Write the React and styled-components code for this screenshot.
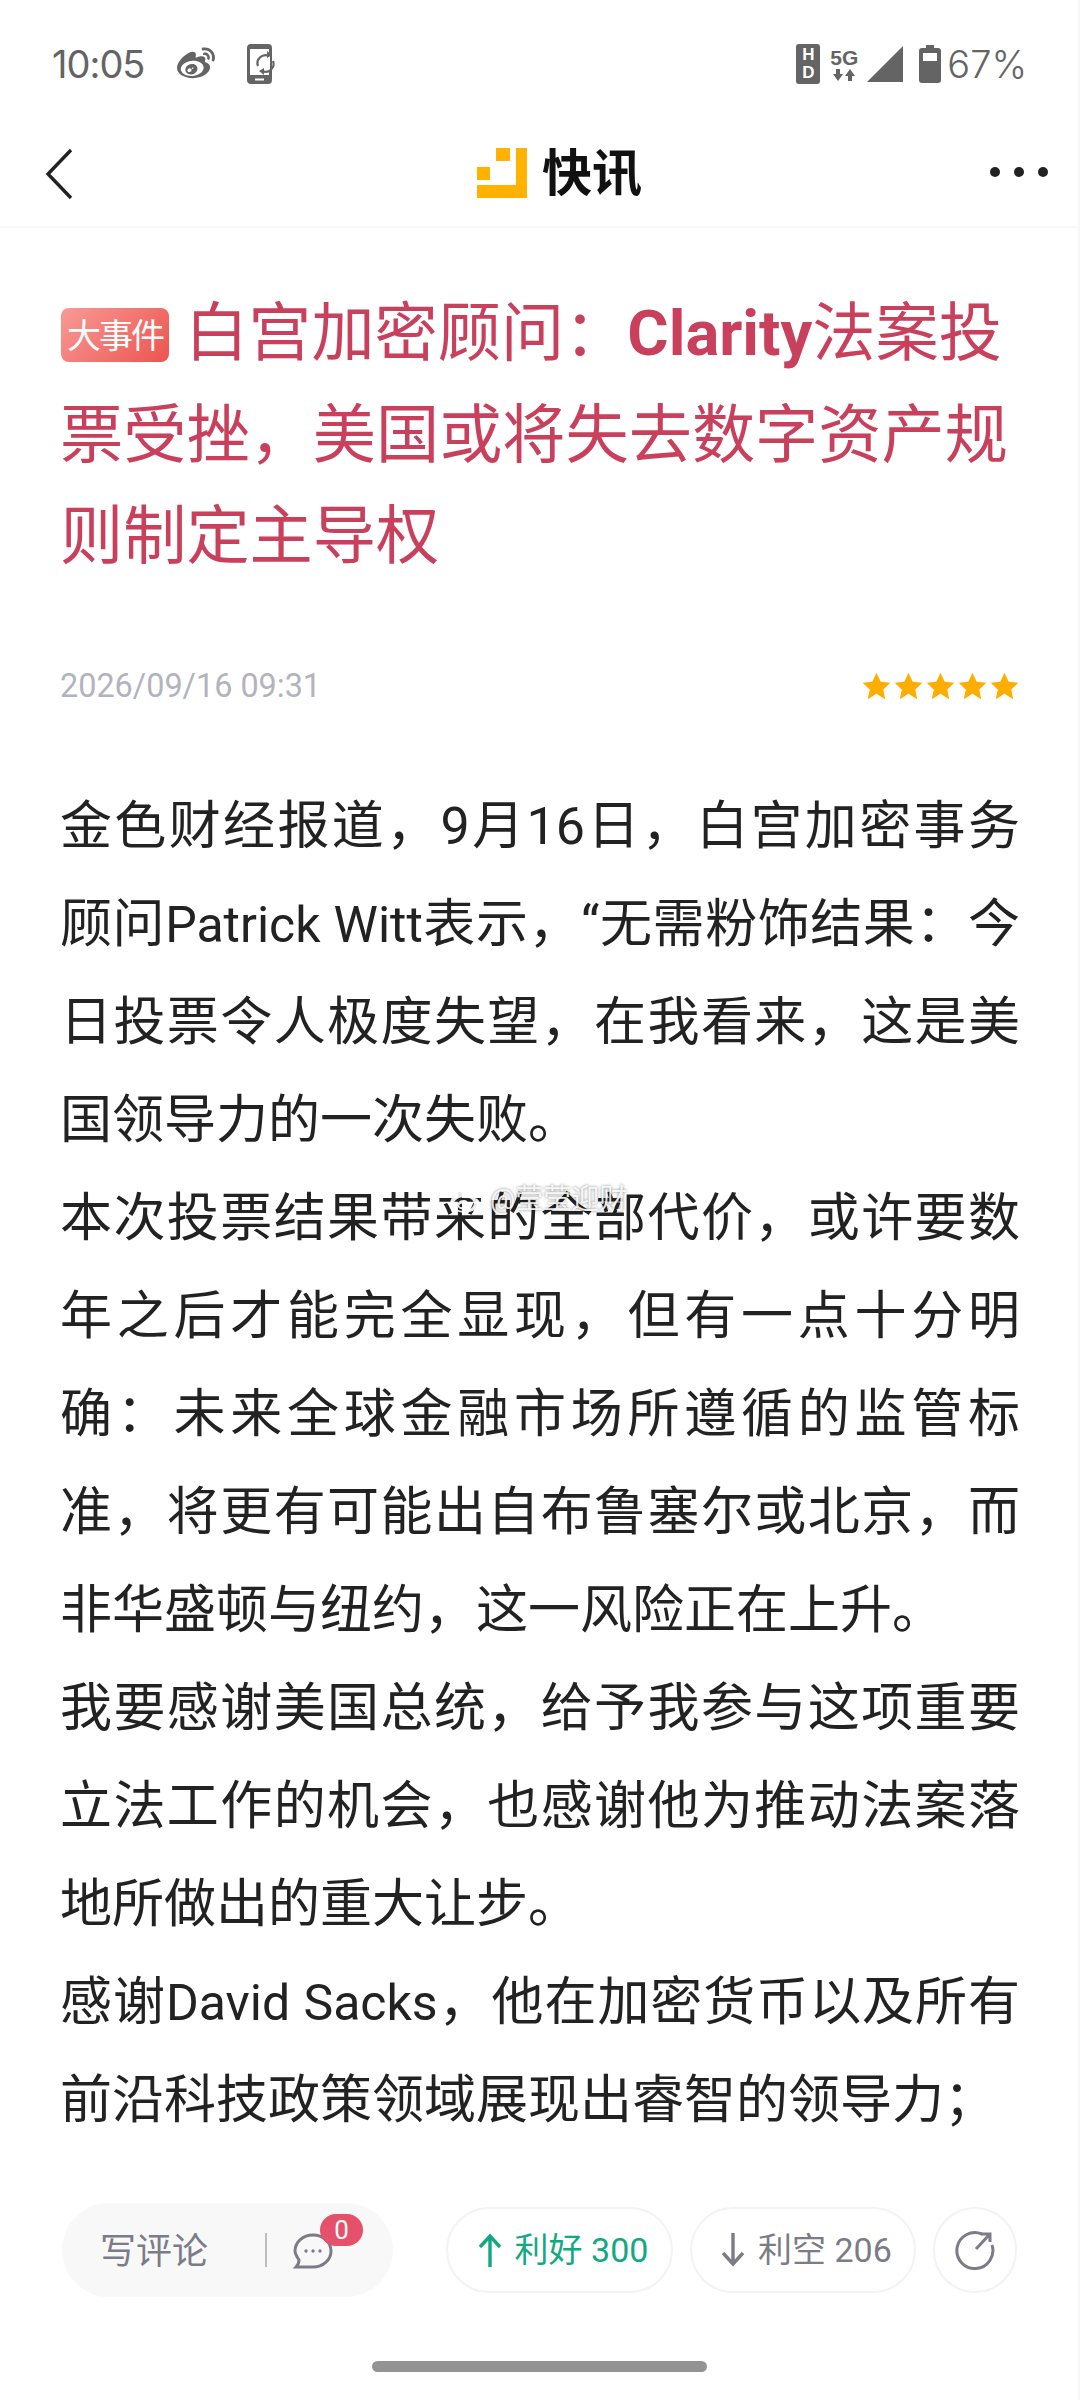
import styled, { createGlobalStyle } from "styled-components";
import { FaWeibo } from "react-icons/fa";

const cjk = `Roboto, "Noto Sans CJK SC", sans-serif`;

const GlobalStyle = createGlobalStyle`
  html, body {
    margin: 0;
    padding: 0;
    background: #fff;
    font-family: ${cjk};
  }
`;

const Page = styled.div`
  position: relative;
  width: 1080px;
  height: 2400px;
  display: flex;
  flex-direction: column;
  overflow: hidden;
  background: #fff;
  border-right: 2px solid #f7f7f7;
  box-sizing: border-box;
`;

const StatusBar = styled.div`
  height: 118px;
  box-sizing: border-box;
  padding: 42px 51px 0 52px;
  display: flex;
  justify-content: space-between;
  align-items: flex-start;
  color: #646464;
`;

const StatusGroup = styled.div`
  display: flex;
  align-items: center;
  height: 44px;
`;

const Clock = styled.span`
  font: 400 38px/44px Inter, sans-serif;
  letter-spacing: -1px;
  width: 92px;
  margin-right: 33px;
`;

const Percent = styled.span`
  font: 300 38px/44px Inter, sans-serif;
  margin-left: 6px;
`;

const HdBadge = styled.span`
  width: 24px;
  height: 40px;
  border-radius: 3px;
  background: #646464;
  color: #fff;
  font: 700 17px/18px "Liberation Sans", sans-serif;
  display: flex;
  flex-direction: column;
  align-items: center;
  justify-content: center;
  margin-right: 8px;
`;

const FiveG = styled.span`
  display: flex;
  flex-direction: column;
  align-items: center;
  width: 32px;
  font: 700 21px/22px "Liberation Sans", sans-serif;
  margin-right: 7px;
`;

const NavBar = styled.div`
  height: 110px;
  box-sizing: border-box;
  border-bottom: 2px solid #f9f9f9;
  padding: 30px 30px 0 45px;
  display: grid;
  grid-template-columns: 432px auto 1fr;
  align-items: start;
`;

const NavTitle = styled.div`
  display: flex;
  align-items: center;
  gap: 15px;
  font: 700 50px/50px "Noto Sans CJK SC", sans-serif;
  color: #111;
`;

const NavTitleText = styled.span`
  margin-top: -8px;
`;

const NavMore = styled.div`
  justify-self: end;
  display: flex;
  gap: 14px;
  padding-top: 19px;
`;

const Dot = styled.span`
  width: 10px;
  height: 10px;
  border-radius: 50%;
  background: #222;
`;

const Article = styled.main`
  flex: 1;
  min-height: 0;
  overflow: hidden;
  padding: 55px 58px 0 60px;
`;

const Title = styled.h1`
  margin: 0;
  font: 400 63.2px/101.5px ${cjk};
  color: #c9405c;
`;

const TitleLatin = styled.span`
  font-weight: 700;
`;

const EventBadge = styled.span`
  display: inline-block;
  width: 108px;
  height: 54px;
  margin: 0 16px 0 1px;
  border-radius: 8px;
  background: linear-gradient(135deg, #f99a95, #ec5450);
  color: #fff;
  font: 400 34px/52px "Noto Sans CJK SC", sans-serif;
  letter-spacing: -2px;
  text-align: center;
  vertical-align: 7px;
`;

const MetaRow = styled.div`
  margin-top: 73px;
  height: 50px;
  display: flex;
  align-items: center;
  justify-content: space-between;
`;

const DateText = styled.span`
  font: 400 32.4px/50px Roboto, sans-serif;
  color: #b3b3be;
  margin-top: 1px;
`;

const Stars = styled.span`
  display: flex;
  gap: 3px;
  margin-right: 1px;
`;

const Body = styled.div`
  margin-top: 67px;
  font: 400 52px/98px ${cjk};
  color: #222;
  text-align: justify;
`;

const Para = styled.p`
  margin: 0;
`;

const BodyLatin = styled.span`
  font-size: 50px;
`;

const Watermark = styled.div`
  position: absolute;
  left: 450px;
  top: 1183px;
  display: flex;
  align-items: center;
  gap: 6px;
  color: rgba(255, 255, 255, 0.9);
  font: 400 28px/32px ${cjk};
  text-shadow: 0 0 3px rgba(0, 0, 0, 0.5);
`;

const BottomBar = styled.div`
  height: 197px;
  box-sizing: border-box;
  padding: 0 61px 0 62px;
  display: flex;
  align-items: flex-start;
`;

const CommentInput = styled.div`
  position: relative;
  width: 332px;
  height: 94px;
  box-sizing: border-box;
  border-radius: 47px;
  background: #f8f8f8;
  padding: 0 0 4px 38px;
  margin-right: 53px;
  display: flex;
  align-items: center;
  color: #7c7c88;
  font: 400 36px/1 "Noto Sans CJK SC", sans-serif;
`;

const Divider = styled.span`
  width: 2px;
  height: 34px;
  background: #bdbdbd;
  margin: 4px 26px 0 57px;
`;

const BubbleSlot = styled.span`
  display: flex;
  margin-top: 8px;
`;

const CountBadge = styled.span`
  position: absolute;
  left: 258px;
  top: 11px;
  width: 43px;
  height: 32px;
  border-radius: 16px;
  background: #e5506a;
  color: #fff;
  font: 400 26px/32px Roboto, sans-serif;
  text-align: center;
`;

const VoteButton = styled.div`
  width: ${(p) => p.$width}px;
  height: 86px;
  margin-top: 4px;
  margin-right: 17px;
  box-sizing: border-box;
  border: 2px solid #f3f3f3;
  border-radius: 43px;
  display: flex;
  align-items: center;
  justify-content: center;
  gap: 12px;
  padding-left: 6px;
  color: ${(p) => p.$color};
  font: 400 34px/1 ${cjk};

  &:last-child {
    margin-right: 0;
    padding-left: 0;
  }
`;

const HomeBar = styled.div`
  position: absolute;
  left: 372px;
  top: 2361px;
  width: 335px;
  height: 11px;
  border-radius: 6px;
  background: #939393;
`;

const Star = () => (
  <svg width="29" height="28" viewBox="0 0 24 23">
    <path
      fill="#ffae00"
      d="M12 0.5l3.5 7.4 8 1-5.9 5.5 1.6 8L12 18l-7.2 4.4 1.6-8L0.5 8.9l8-1z"
    />
  </svg>
);

const PhoneSync = () => (
  <svg width="30" height="40" viewBox="0 0 30 40" fill="none">
    <path
      fill="#646464"
      fillRule="evenodd"
      d="M4 0h17a4 4 0 0 1 4 4v32a4 4 0 0 1-4 4H4a4 4 0 0 1-4-4V4a4 4 0 0 1 4-4zM3 5v26h19V5zM8 34.5v2h9v-2z"
    />
    <path fill="#fff" d="M10 9h13v17H10z" />
    <path d="M11 22a8 8 0 0 1 11-10M26 17a8 8 0 0 1-11 10" stroke="#646464" strokeWidth="2.2" />
    <path fill="#646464" d="M20 7l5 4-5 3zM17 24l-5 3 5 4z" />
  </svg>
);

const Signal = () => (
  <svg width="36" height="36" viewBox="0 0 36 36" style={{ marginRight: 16 }}>
    <path fill="#646464" d="M36 0v36H0z" />
  </svg>
);

const Battery = () => (
  <svg width="22" height="38" viewBox="0 0 22 38">
    <path
      fill="#646464"
      fillRule="evenodd"
      d="M7 0h8v3h4a3 3 0 0 1 3 3v29a3 3 0 0 1-3 3H3a3 3 0 0 1-3-3V6a3 3 0 0 1 3-3h4zM4 8v8h14V8z"
    />
  </svg>
);

const NetArrows = () => (
  <svg width="22" height="12" viewBox="0 0 22 12">
    <path fill="#646464" d="M3 0h4v5h3L5 12 0 5h3zM15 12h4V7h3l-5-7-5 7h3z" />
  </svg>
);

const Logo = () => (
  <svg width="50" height="50" viewBox="0 0 50 50">
    <path
      fill="#ffb300"
      d="M39 0h11v50H0V37h39zM19 0h14v13H19zM0 19h13v13H0z"
    />
  </svg>
);

const Back = () => (
  <svg width="28" height="52" viewBox="0 0 28 52" fill="none">
    <path d="M26 2L3 26l23 24" stroke="#222" strokeWidth="3.4" />
  </svg>
);

const Bubble = () => (
  <svg width="40" height="38" viewBox="0 0 40 38" fill="none">
    <path
      d="M20 2c10 0 18 7 18 16s-8 16-18 16H3c2-2 3-4 3-7-2-3-4-6-4-9C2 9 10 2 20 2z"
      stroke="#7c7c88"
      strokeWidth="3"
    />
    <circle cx="13" cy="18" r="1.7" fill="#7c7c88" />
    <circle cx="20" cy="18" r="1.7" fill="#7c7c88" />
    <circle cx="27" cy="18" r="1.7" fill="#7c7c88" />
  </svg>
);

const Arrow = ({ color, down }) => (
  <svg
    width="26"
    height="34"
    viewBox="0 0 26 34"
    fill="none"
    style={{ transform: down ? "rotate(180deg)" : "none" }}
  >
    <path d="M13 34V3M3 14L13 3l10 11" stroke={color} strokeWidth="3.4" />
  </svg>
);

const ShareIcon = () => (
  <svg width="42" height="42" viewBox="0 0 42 42" fill="none">
    <path d="M28 5A18 18 0 1 0 38 16" stroke="#7c7c88" strokeWidth="3" />
    <path d="M22 20L35 6M27 5h9v8" stroke="#7c7c88" strokeWidth="3" />
  </svg>
);

export default function App() {
  return (
    <Page>
      <GlobalStyle />
      <StatusBar>
        <StatusGroup>
          <Clock>10:05</Clock>
          <FaWeibo size={38} style={{ marginRight: 32 }} />
          <PhoneSync />
        </StatusGroup>
        <StatusGroup>
          <HdBadge>
            <span>H</span>
            <span>D</span>
          </HdBadge>
          <FiveG>
            5G
            <NetArrows />
          </FiveG>
          <Signal />
          <Battery />
          <Percent>67%</Percent>
        </StatusGroup>
      </StatusBar>
      <NavBar>
        <Back />
        <NavTitle>
          <Logo />
          <NavTitleText>快讯</NavTitleText>
        </NavTitle>
        <NavMore>
          <Dot />
          <Dot />
          <Dot />
        </NavMore>
      </NavBar>
      <Article>
        <Title>
          <EventBadge>大事件</EventBadge>
          {"白宫加密顾问\uFF1A"}
          <TitleLatin>Clarity</TitleLatin>
          {"法案投票受挫\uFF0C美国或将失去数字资产规则制定主导权"}
        </Title>
        <MetaRow>
          <DateText>2026/09/16 09:31</DateText>
          <Stars>
            {[0, 1, 2, 3, 4].map((i) => (
              <Star key={i} />
            ))}
          </Stars>
        </MetaRow>
        <Body>
          <Para>
            {"金色财经报道\uFF0C9月16日\uFF0C白宫加密事务顾问"}
            <BodyLatin>Patrick Witt</BodyLatin>
            {"表示\uFF0C“无需粉饰结果\uFF1A今日投票令人极度失望\uFF0C在我看来\uFF0C这是美国领导力的一次失败。"}
          </Para>
          <Para>
            {"本次投票结果带来的全部代价\uFF0C或许要数年之后才能完全显现\uFF0C但有一点十分明确\uFF1A未来全球金融市场所遵循的监管标准\uFF0C将更有可能出自布鲁塞尔或北京\uFF0C而非华盛顿与纽约\uFF0C这一风险正在上升。"}
          </Para>
          <Para>
            {"我要感谢美国总统\uFF0C给予我参与这项重要立法工作的机会\uFF0C也感谢他为推动法案落地所做出的重大让步。"}
          </Para>
          <Para>
            {"感谢"}
            <BodyLatin>David Sacks</BodyLatin>
            {"\uFF0C他在加密货币以及所有前沿科技政策领域展现出睿智的领导力\uFF1B"}
          </Para>
        </Body>
      </Article>
      <BottomBar>
        <CommentInput>
          写评论
          <Divider />
          <BubbleSlot>
            <Bubble />
          </BubbleSlot>
          <CountBadge>0</CountBadge>
        </CommentInput>
        <VoteButton $width={227} $color="#12a982">
          <Arrow color="#12a982" />
          利好 300
        </VoteButton>
        <VoteButton $width={227} $color="#7c7c88">
          <Arrow color="#7c7c88" down />
          利空 206
        </VoteButton>
        <VoteButton $width={84} $color="#7c7c88">
          <ShareIcon />
        </VoteButton>
      </BottomBar>
      <Watermark>
        <FaWeibo size={34} />
        @莹莹迎财
      </Watermark>
      <HomeBar />
    </Page>
  );
}
